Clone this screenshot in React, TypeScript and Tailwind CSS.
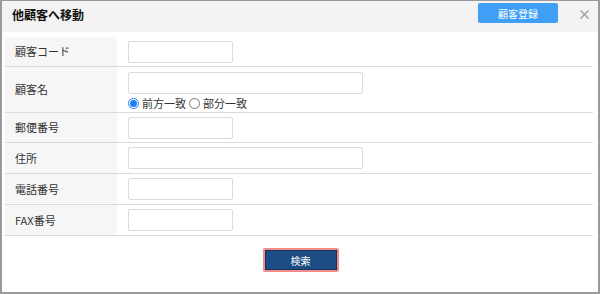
import React from "react";

const font = { fontFamily: '"Noto Sans CJK JP", "Noto Sans", sans-serif' };

function Input({ wide = false }: { wide?: boolean }) {
  return (
    <div
      className={`h-[22px] ${wide ? "w-[235px]" : "w-[105px]"} border border-[#dcdcdc] rounded-[2px] bg-white`}
    />
  );
}

function Row({ label, h, children }: { label: string; h: string; children: React.ReactNode }) {
  return (
    <div className={`flex ${h} border-b border-[#dadada]`}>
      <div className="w-[112px] bg-[#f6f6f6] flex items-center pl-[10px] text-[11px] text-[#333]">{label}</div>
      <div className="flex-1 pl-[11px] flex flex-col justify-center">{children}</div>
    </div>
  );
}

function Radio({ checked, label }: { checked?: boolean; label: string }) {
  return (
    <span className="flex items-center gap-[3px]">
      <span
        className={`w-[11px] h-[11px] rounded-full border ${checked ? "border-[#1e7ef0]" : "border-[#777]"} bg-white flex items-center justify-center`}
      >
        {checked && <span className="w-[7px] h-[7px] rounded-full bg-[#1e7ef0]" />}
      </span>
      <span className="text-[11px] text-[#333] leading-none">{label}</span>
    </span>
  );
}

export default function App() {
  return (
    <div style={font} className="w-[600px] h-[294px] bg-white">
      <div className="w-[600px] h-[294px] border-t border-l-2 border-r-2 border-b-2 border-[#9a9a9a] flex flex-col">
        <div className="h-[31px] bg-[#f3f3f3] flex items-start justify-between pl-[10px] pr-[8px]">
          <span className="text-[12px] font-bold text-[#111] mt-[5px]">他顧客へ移動</span>
          <div className="flex items-start gap-[22px] mt-[2px]">
            <div className="w-[80px] h-[20px] bg-[#3f9ff6] rounded-[2px] flex items-center justify-center text-white text-[10px]">
              顧客登録
            </div>
            <svg width="9" height="9" viewBox="0 0 9 9" className="mt-[7px] mr-[1px]">
              <path d="M0.5 0.5 L8.5 8.5 M8.5 0.5 L0.5 8.5" stroke="#9a9a9a" strokeWidth="1.3" />
            </svg>
          </div>
        </div>
        <div className="ml-[3px] mr-[5px] mt-[5px]">
          <Row label="顧客コード" h="h-[30px]">
            <Input />
          </Row>
          <Row label="顧客名" h="h-[46px]">
            <div className="flex flex-col gap-[4px] pt-[2px]">
              <Input wide />
              <div className="flex items-center gap-[3px]">
                <Radio checked label="前方一致" />
                <Radio label="部分一致" />
              </div>
            </div>
          </Row>
          <Row label="郵便番号" h="h-[30px]">
            <Input />
          </Row>
          <Row label="住所" h="h-[31px]">
            <Input wide />
          </Row>
          <Row label="電話番号" h="h-[31px]">
            <Input />
          </Row>
          <Row label="FAX番号" h="h-[31px]">
            <Input />
          </Row>
        </div>
        <div className="flex justify-center mt-[12px] pl-[1px]">
          <div className="w-[76px] h-[24px] border-2 border-[#f38b8b] rounded-[2px] flex">
            <div className="flex-1 bg-[#1b4c84] border border-[#15365c] flex items-center justify-center text-white text-[10px]">
              検索
            </div>
          </div>
        </div>
      </div>
    </div>
  );
}
